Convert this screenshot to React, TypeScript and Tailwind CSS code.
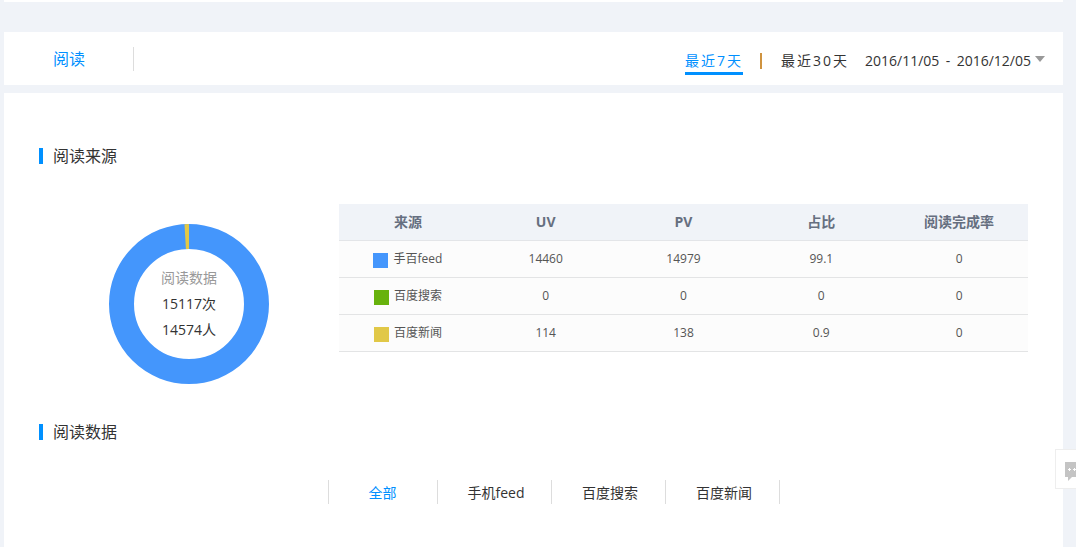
import { useState } from "react";

const sources = [
  { name: "手百feed", swatch: "bg-[#4496fc]", uv: "14460", pv: "14979", share: "99.1", rate: "0" },
  { name: "百度搜索", swatch: "bg-[#67b20d]", uv: "0", pv: "0", share: "0", rate: "0" },
  { name: "百度新闻", swatch: "bg-[#e1c847]", uv: "114", pv: "138", share: "0.9", rate: "0" },
];

const columns = ["来源", "UV", "PV", "占比", "阅读完成率"];
const channels = ["全部", "手机feed", "百度搜索", "百度新闻"];

function SectionTitle({ children }: { children: string }) {
  return (
    <h2 className="flex items-center gap-2.5 text-base leading-6 text-[#333]">
      <span className="h-4 w-1 bg-[#0090ff]" />
      {children}
    </h2>
  );
}

function RangeBar() {
  const [range, setRange] = useState(7);
  const base = "h-7 cursor-pointer border-b-3 pt-0.5 text-sm leading-6 tracking-[2px]";
  const on = "border-[#0090ff] text-[#0090ff]";
  const off = "border-transparent text-[#333]";
  return (
    <header className="flex h-[53px] items-center justify-between bg-white pr-[18px]">
      <div className="flex h-6 w-[130px] items-center border-r border-[#ddd] pl-[49px]">
        <h1 className="text-base leading-6 text-[#0090ff]">阅读</h1>
      </div>
      <div className="flex items-center pt-1">
        <button type="button" onClick={() => setRange(7)} className={`${base} ${range === 7 ? on : off}`}>
          最近7天
        </button>
        <span className="mr-[19px] ml-[17px] h-4 w-0.5 bg-[#cf9340]" />
        <button type="button" onClick={() => setRange(30)} className={`${base} ${range === 30 ? on : off}`}>
          最近30天
        </button>
        <button type="button" className="ml-4 flex cursor-pointer items-center gap-1 text-sm leading-6 text-[#333]">
          <span className="flex w-[166px] justify-between">
            <span>2016/11/05</span>
            <span>-</span>
            <span>2016/12/05</span>
          </span>
          <svg className="mb-1 h-1.5 w-2.5" viewBox="0 0 10 6" aria-hidden="true">
            <path d="M0 0h10L5 6z" fill="#999" />
          </svg>
        </button>
      </div>
    </header>
  );
}

function Donut() {
  return (
    <div className="grid w-[300px] shrink-0 place-items-center pt-5">
      <svg className="col-start-1 row-start-1 size-40" viewBox="0 0 160 160" aria-hidden="true">
        <circle cx="80" cy="80" r="67.5" fill="none" stroke="#4496fc" strokeWidth="25" />
        <path d="M75.5 0.13A80 80 0 0 1 80 0V25A55 55 0 0 0 76.9 25.09Z" fill="#e1c847" />
      </svg>
      <div className="col-start-1 row-start-1 text-center text-sm leading-[26px] text-[#333]">
        <p className="text-[#999]">阅读数据</p>
        <p>15117次</p>
        <p>14574人</p>
      </div>
    </div>
  );
}

function SourceTable() {
  return (
    <table className="w-full table-fixed border-collapse text-center">
      <thead>
        <tr className="h-9 border-b border-[#e3e5e8] bg-[#f0f3f8] text-sm leading-5 text-[#666f80]">
          {columns.map((c) => (
            <th key={c} scope="col" className="font-bold">
              {c}
            </th>
          ))}
        </tr>
      </thead>
      <tbody>
        {sources.map((s) => (
          <tr key={s.name} className="h-[37px] border-b border-[#e3e4e5] bg-[#fcfcfc] text-xs leading-5 text-[#555]">
            <td>
              <div className="flex items-center justify-center gap-[5px]">
                <span className={`mt-[3px] size-[15px] ${s.swatch}`} />
                {s.name}
              </div>
            </td>
            <td>{s.uv}</td>
            <td>{s.pv}</td>
            <td>{s.share}</td>
            <td>{s.rate}</td>
          </tr>
        ))}
      </tbody>
    </table>
  );
}

function ChannelTabs() {
  const [active, setActive] = useState(channels[0]);
  return (
    <nav className="flex justify-center pl-10">
      <div className="flex h-6 border-l border-[#ddd]">
        {channels.map((c, i) => (
          <button
            key={c}
            type="button"
            onClick={() => setActive(c)}
            className={`cursor-pointer border-r border-[#ddd] pt-px text-sm leading-6 ${
              i === 0 ? "w-[109px]" : "w-[114px] pl-1"
            } ${c === active ? "text-[#0090ff]" : "text-[#333]"}`}
          >
            {c}
          </button>
        ))}
      </div>
    </nav>
  );
}

export default function App() {
  return (
    <div className="flex min-h-screen flex-col bg-[#f0f3f8] pr-[13px] pl-1 font-['Open_Sans','Noto_Sans_CJK_SC',sans-serif]">
      <div className="mb-[30px] h-0.5 bg-white" />
      <RangeBar />
      <main className="mt-2 grow bg-white px-[35px] pt-[51px] pb-[43px]">
        <SectionTitle>阅读来源</SectionTitle>
        <div className="mt-9 mb-9 flex items-start">
          <Donut />
          <SourceTable />
        </div>
        <SectionTitle>阅读数据</SectionTitle>
        <div className="mt-9">
          <ChannelTabs />
        </div>
      </main>
      <button
        type="button"
        aria-label="反馈"
        className="fixed top-[449px] right-0 flex h-10 w-[21px] cursor-pointer items-center overflow-hidden border border-r-0 border-[#eee] bg-white pl-[9px]"
      >
        <svg className="mt-1.5 h-5 w-[22px] shrink-0" viewBox="0 0 22 20" aria-hidden="true">
          <path d="M0 0h22v15H7L3 19V15H0z" fill="#c4c4c4" />
          <g fill="#fff">
            <path d="M3 7h3v1H3zM4 6h1v3H4zM8 7h3v1H8zM9 6h1v3H9zM13 7h3v1h-3zM14 6h1v3h-1z" />
          </g>
        </svg>
      </button>
    </div>
  );
}
